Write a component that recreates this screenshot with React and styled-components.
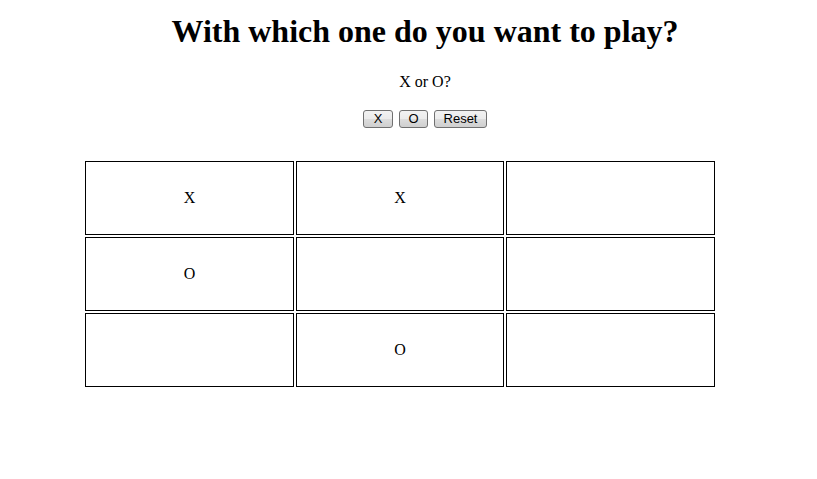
import React from "react";
import styled, { createGlobalStyle } from "styled-components";

const Global = createGlobalStyle`
  html, body { margin: 0; padding: 0; background: #fff; overflow: hidden; }
  body { font-family: "Liberation Serif", "Times New Roman", serif; color: #000; }
`;

const Page = styled.div`
  display: flex;
  flex-direction: column;
`;

const Header = styled.header`
  display: flex;
  flex-direction: column;
  align-items: center;
  padding-left: 33px;
`;

const Title = styled.h1`
  margin: 13px 0 0;
  font-family: "Liberation Serif", "Times New Roman", serif;
  font-weight: bold;
  font-size: 32px;
  line-height: 37px;
`;

const Prompt = styled.p`
  margin: 23px 0 0;
  font-size: 16px;
  line-height: 18px;
`;

const ButtonRow = styled.div`
  display: flex;
  gap: 6px;
  margin-top: 19px;
`;

const Button = styled.button`
  box-sizing: border-box;
  height: 18px;
  min-width: ${(p) => p.$w}px;
  padding: 0 8px;
  font-family: "Liberation Sans", Arial, sans-serif;
  font-size: 13px;
  line-height: 14px;
  color: #000;
  border: 1px solid #707070;
  border-radius: 3px;
  background: linear-gradient(#f2f2f2 0%, #ebebeb 50%, #dddddd 51%, #cfcfcf 100%);
  cursor: pointer;
`;

const Board = styled.div`
  display: grid;
  grid-template-columns: 209px 208px 209px;
  grid-auto-rows: 74px;
  gap: 2px;
  margin: 33px 0 0 85px;
`;

const Cell = styled.div`
  box-sizing: border-box;
  border: 1px solid #000;
  display: flex;
  align-items: center;
  justify-content: center;
  font-family: "Liberation Serif", "Times New Roman", serif;
  font-size: 16px;
`;

const cells = ["X", "X", "", "O", "", "", "", "O", ""];

export default function App() {
  return (
    <Page>
      <Global />
      <Header>
        <Title>With which one do you want to play?</Title>
        <Prompt>X or O?</Prompt>
        <ButtonRow>
          <Button $w={30}>X</Button>
          <Button $w={29}>O</Button>
          <Button $w={53}>Reset</Button>
        </ButtonRow>
      </Header>
      <Board>
        {cells.map((c, i) => (
          <Cell key={i}>{c}</Cell>
        ))}
      </Board>
    </Page>
  );
}
